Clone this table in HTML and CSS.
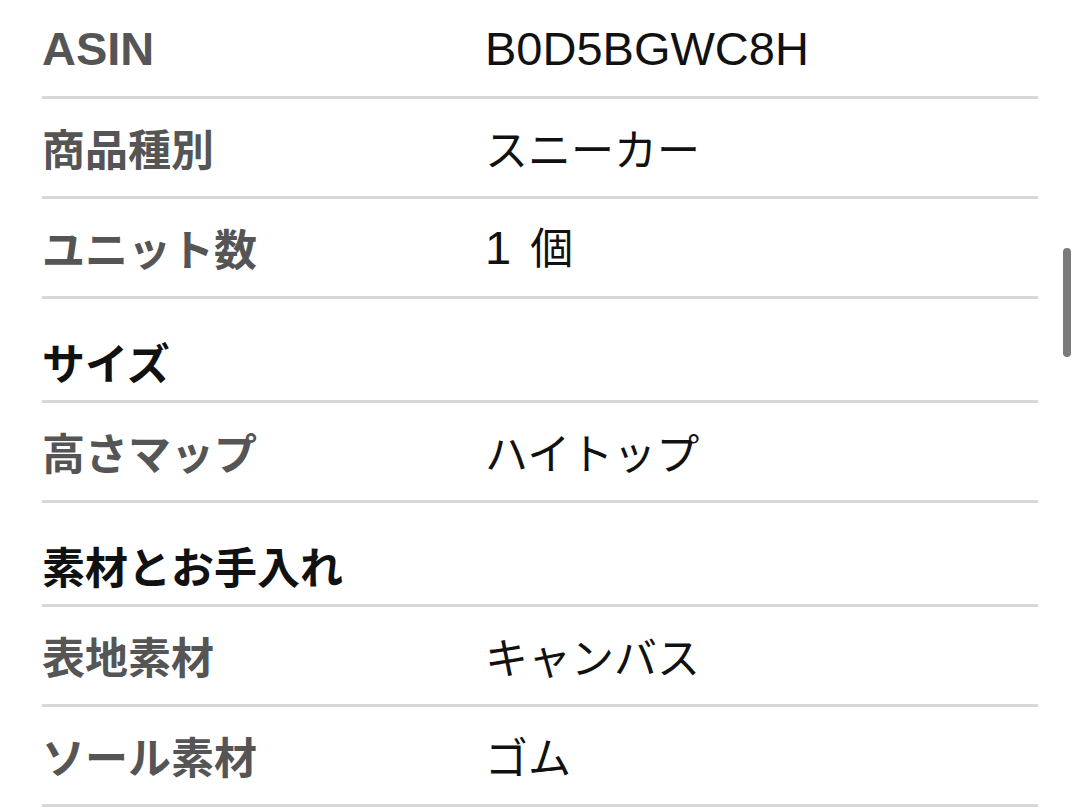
FILE: index.html
```html
<!DOCTYPE html>
<html lang="ja">
<head>
<meta charset="utf-8">
<link rel="stylesheet" href="styles.css">
</head>
<body>
<div class="page">
  <div class="table">
    <div class="row first">
      <div class="label"><span class="latin">ASIN</span></div>
      <div class="value"><span class="latin">B0D5BGWC8H</span></div>
    </div>
    <div class="row">
      <div class="label">商品種別</div>
      <div class="value">スニーカー</div>
    </div>
    <div class="row">
      <div class="label">ユニット数</div>
      <div class="value"><span class="latin num">1</span>個</div>
    </div>
    <div class="row section">
      <div class="heading">サイズ</div>
    </div>
    <div class="row">
      <div class="label">高さマップ</div>
      <div class="value">ハイトップ</div>
    </div>
    <div class="row section">
      <div class="heading">素材とお手入れ</div>
    </div>
    <div class="row">
      <div class="label">表地素材</div>
      <div class="value">キャンバス</div>
    </div>
    <div class="row">
      <div class="label">ソール素材</div>
      <div class="value">ゴム</div>
    </div>
  </div>
  <div class="scrollbar"></div>
</div>
</body>
</html>
```
FILE: styles.css
```css
html, body {
  margin: 0;
  padding: 0;
  background: #ffffff;
}
body {
  width: 1080px;
  height: 811px;
  overflow: hidden;
  font-family: "Noto Sans CJK JP", "Liberation Sans", sans-serif;
}
.page {
  position: relative;
  width: 1080px;
  height: 811px;
}
.table {
  margin-left: 42px;
  width: 996px;
  display: flex;
  flex-direction: column;
}
.row {
  display: flex;
  align-items: center;
  height: 97px;
  border-bottom: 3px solid #d8d8d8;
  box-sizing: content-box;
}
.row.first {
  height: 96px;
}
.row.section {
  height: 101px;
  align-items: flex-end;
}
.label {
  width: 443px;
  font-size: 43px;
  line-height: 1;
  font-weight: 700;
  color: #555555;
}
.value {
  font-size: 43px;
  line-height: 1;
  font-weight: 400;
  color: #111111;
}
.heading {
  font-size: 43px;
  line-height: 1;
  font-weight: 700;
  color: #111111;
  padding-bottom: 17px;
}
.latin {
  font-family: "Liberation Sans", sans-serif;
  font-size: 47px;
  font-weight: 400;
}
.num {
  margin-right: 19px;
}
.label .latin {
  font-size: 47px;
  font-weight: 700;
  color: #555555;
}
.scrollbar {
  position: absolute;
  left: 1063px;
  top: 248px;
  width: 8px;
  height: 109px;
  border-radius: 4px;
  background: #7b7b7b;
}
```
